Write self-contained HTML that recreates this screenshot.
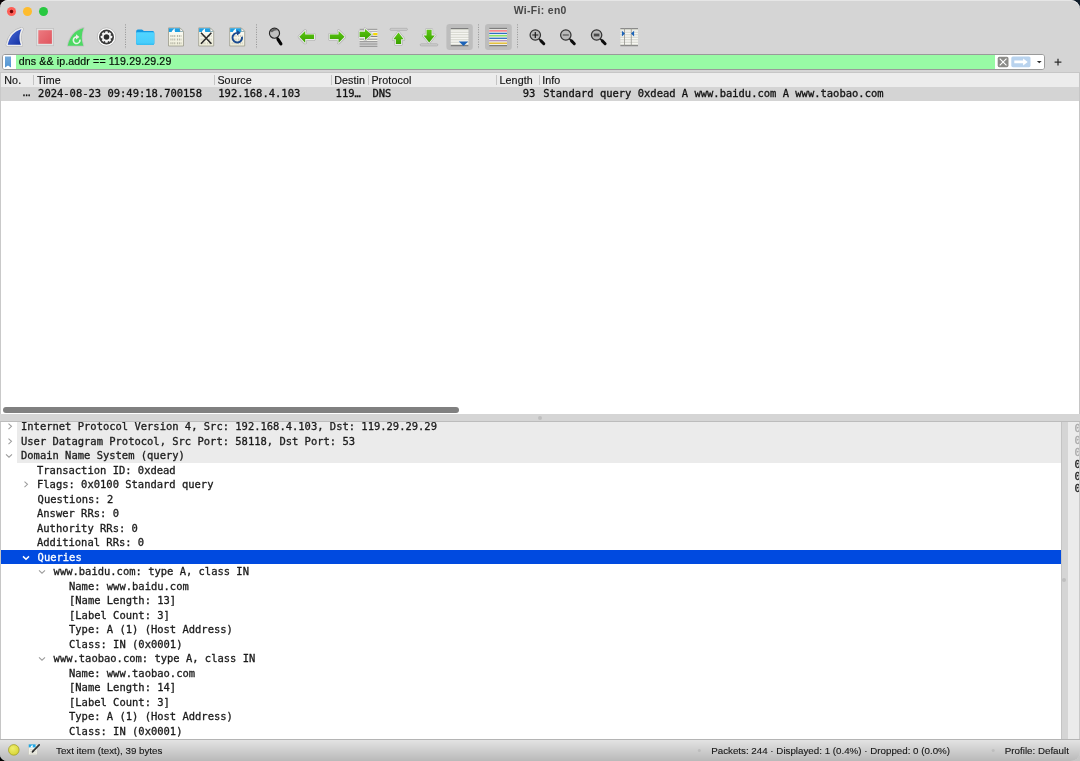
<!DOCTYPE html>
<html><head><meta charset="utf-8">
<style>
*{box-sizing:border-box;margin:0;padding:0}
html,body{width:1080px;height:761px;overflow:hidden;background:#c6c6c6}
body{position:relative;font-family:"Liberation Sans",sans-serif;font-size:10.5px;color:#1e1e1e}
.win{position:absolute;left:0;top:0;width:1080px;height:761px;background:#d5d5d5;border-radius:8px 9px 9px 7px;overflow:hidden;will-change:transform;box-shadow:inset 0 1px 0 #e6e6e6}
.cnr{position:absolute;width:12px;height:12px}
.abs{position:absolute}
.title{position:absolute;left:0;top:0;width:1080px;height:21px;text-align:center;font-weight:bold;font-size:10.4px;line-height:22px;letter-spacing:0.35px;padding-left:0.4px;color:#474747}
.tl{position:absolute;top:6.7px;width:9.4px;height:9.4px;border-radius:50%}
.mono{font-family:"DejaVu Sans Mono","Liberation Mono",monospace;font-size:10.47px;white-space:pre;-webkit-text-stroke:0.3px}
/* filter */
.filter{position:absolute;left:1.5px;top:54.2px;width:1043.8px;height:15.4px;background:#fff;border:1px solid #9a9a9a;border-radius:3px;overflow:hidden}
.filter .bm{position:absolute;left:0;top:0;width:13.2px;height:14px;background:#fff}
.filter .gr{position:absolute;left:13.2px;top:0;right:49.6px;height:14px;background:#98fba5}
.filter .txt{position:absolute;left:16.2px;top:0;line-height:13.6px;font-size:10.6px;letter-spacing:0.13px;color:#061006;-webkit-text-stroke:0.2px}
.filter .rt{position:absolute;right:-0.2px;top:0;width:49.8px;height:14px;background:#fff}
/* packet list */
.plist{position:absolute;left:0;top:72px;width:1080px;height:342.2px;background:#fff;border-top:1px solid #c6c6c6}
.plist::after{content:"";position:absolute;left:0;top:0;width:1px;height:100%;background:#c9c9c9}
.plist::before{content:"";position:absolute;right:0;top:0;width:1px;height:100%;background:#c6c6c6;z-index:2}
.phead{position:absolute;left:0;top:0;width:1080px;height:13.8px;background:#ececec}
.phead span{position:absolute;top:0;line-height:14.4px;font-size:10.7px;letter-spacing:0.1px;color:#141414;-webkit-text-stroke:0.15px}
.phead i{position:absolute;top:1.6px;width:1px;height:10.6px;background:#c4c4c4}
.prow{position:absolute;left:0;top:13.8px;width:1080px;height:13.9px;background:#d4d4d4}
.prow span{position:absolute;top:0;line-height:13.6px;color:#111}
.hscroll{position:absolute;left:2.6px;top:334.4px;width:456px;height:5.4px;border-radius:3px;background:#808080}
/* details */
.det{position:absolute;left:0;top:421.5px;width:1061.7px;height:317.3px;background:#fff;overflow:hidden;border-left:1.2px solid #c6c6c6;border-right:0.7px solid #c4c4c4}
.r{position:absolute;left:0;width:1061px;height:14.5px;line-height:14.5px;color:#1a1a1a}
.r.g::before{content:"";position:absolute;left:16px;top:0;right:0;height:14.5px;background:#ebebeb}
.r.sel{background:#004ae0;color:#fff;height:14.9px}
.r span{position:absolute;top:0}
.ch{position:absolute;top:0}
.bytes{position:absolute;left:1067.9px;top:421.5px;width:12.1px;height:317.3px;background:#ebebeb;overflow:hidden;border-right:1px solid #c9c9c9;font-size:10.5px}
.bytes span{position:absolute;left:6.7px;line-height:12px;height:12px}
.status{position:absolute;left:0;top:738.8px;width:1080px;height:22.2px;border-top:1.2px solid #b4b4b4;background:linear-gradient(#e3e3e3,#b9b9b9);font-size:9.78px;color:#161616;-webkit-text-stroke:0.12px}
.status span{position:absolute;top:0;line-height:21px}
</style></head><body>
<div class="cnr" style="left:0;top:0;background:#0a0206"></div><div class="cnr" style="right:0;top:0;background:#0e1b28"></div><div class="cnr" style="left:0;bottom:0;background:#000"></div>
<div class="win">
 <div class="title">Wi-Fi: en0</div>
 <div class="tl" style="left:6.7px;background:radial-gradient(circle,#6e0000 0,#7a0505 1.3px,#fe5f57 2.2px)"></div>
 <div class="tl" style="left:22.8px;background:#febc2e"></div>
 <div class="tl" style="left:38.9px;background:#28c840"></div>

<!--TB-->
 <svg class="abs" style="left:0;top:22px" width="1080" height="30" viewBox="0 22 1080 30">
  <defs>
   <linearGradient id="gB" x1="0" y1="0" x2="1" y2="1"><stop offset="0" stop-color="#4a6ad8"/><stop offset="1" stop-color="#1230a2"/></linearGradient>
   <linearGradient id="gR" x1="0" y1="0" x2="1" y2="1"><stop offset="0" stop-color="#ec7a80"/><stop offset="1" stop-color="#e0555e"/></linearGradient>
   <linearGradient id="gG" x1="0" y1="0" x2="0" y2="1"><stop offset="0" stop-color="#5cc812"/><stop offset="1" stop-color="#3aa000"/></linearGradient>
   <linearGradient id="gDoc" x1="0" y1="0" x2="0" y2="1"><stop offset="0" stop-color="#fdfdf8"/><stop offset="1" stop-color="#efeeda"/></linearGradient>
   <filter id="sh" x="-20%" y="-20%" width="140%" height="140%"><feDropShadow dx="0" dy="0.3" stdDeviation="0.45" flood-color="#000" flood-opacity="0.35"/></filter>
   <linearGradient id="gF" x1="0" y1="0" x2="0" y2="1"><stop offset="0" stop-color="#52d5ff"/><stop offset="0.8" stop-color="#48cefc"/><stop offset="1" stop-color="#34bcf0"/></linearGradient>
   <path id="fin" d="M21.5 29.2 C13.5 31.3 9.3 37.5 7.8 44.7 L20.9 44.7 C18.9 40 18.9 34 21.5 29.2 Z"/>
   <path id="fin2" d="M83.6 27.9 C74 30.5 69.5 37.5 67.8 45.7 L83.3 45.7 C81.2 40 81.2 34 83.6 27.9 Z"/>
   <g id="doc">
    <path d="M0.5 0.5 H12 L15.5 4 V18.6 H0.5 Z" fill="url(#gDoc)" stroke="#9a9a8c" stroke-width="0.8"/>
    <path d="M0.9 0.9 H11.9 L15 4 V4.7 H0.9 Z" fill="#1e9fe2"/>
    <path d="M3.6 4.7 C4.4 3 5.4 1.9 7 1.2 C6.5 2.4 6.6 3.6 7.2 4.7 Z" fill="#fff"/>
    <path d="M12 0.5 V4 H15.5 Z" fill="#fff" stroke="#9a9a8c" stroke-width="0.6"/>
   </g>
   <g id="doclines" stroke="#8f8f80" stroke-width="2" stroke-dasharray="1.1 0.8 1.1 0.8 1.1 1.6" opacity="0.62">
    <path d="M2.4 8.6 H13.4"/><path d="M2.4 12.2 H13.4"/><path d="M2.4 15.8 H13.4"/>
   </g>
   <g id="mag">
    <circle cx="0" cy="0" r="5.2" fill="#b9b9b9" stroke="#333" stroke-width="1.25"/>
    <path d="M3.7 3.9 L5.6 5.8" stroke="#1a1a1a" stroke-width="1.6"/>
    <path d="M5.7 5.9 L8.5 8.7" stroke="#0c0c0c" stroke-width="3" stroke-linecap="round"/>
   </g>
  </defs>

  <!-- start capture (blue fin) -->
  <use href="#fin" fill="none" stroke="#b8b8b8" stroke-width="4.4" stroke-linejoin="round"/>
  <use href="#fin" fill="none" stroke="#ececec" stroke-width="3.2" stroke-linejoin="round"/>
  <use href="#fin" fill="url(#gB)"/>
  <!-- stop (red square) -->
  <rect x="36.4" y="28.5" width="17.2" height="17.2" fill="#e2e2e2" stroke="#c2c2c2" stroke-width="0.8"/>
  <rect x="38.3" y="30.2" width="13.6" height="13.6" fill="url(#gR)"/>
  <!-- restart (green fin) -->
  <use href="#fin2" fill="none" stroke="#c4c4c4" stroke-width="1.8" stroke-linejoin="round"/>
  <use href="#fin2" fill="#4dd964"/>
  <path d="M79.9 39.6 A3.3 3.3 0 1 1 76.4 36.9" fill="none" stroke="#eaf6ea" stroke-width="1.6"/>
  <path d="M76 34.3 L79.4 36.9 L76 39.4 Z" fill="#f3e9ee"/>
  <!-- options (gear) -->
  <circle cx="106.5" cy="37" r="9.2" fill="#fff" stroke="#b0b0b0" stroke-width="0.7"/>
  <circle cx="106.5" cy="37" r="7.5" fill="#3b3b3b"/>
  <g transform="translate(106.5 37)" fill="#f4f4f4">
   <circle r="4.5"/>
   <g id="teeth"><rect x="-1.3" y="-5.7" width="2.6" height="11.4" rx="0.6"/><rect x="-5.7" y="-1.3" width="11.4" height="2.6" rx="0.6"/></g>
   <use href="#teeth" transform="rotate(45)"/>
   <circle r="2.8" fill="#2e2e2e"/>
  </g>

  <!-- separators -->
  <g stroke="#8c8c8c" stroke-width="1" stroke-dasharray="1 1.45" opacity="0.9">
   <path d="M125.5 24.4 V49"/><path d="M256.5 24.4 V49"/><path d="M478.5 24.4 V49"/><path d="M517.5 24.4 V49"/>
  </g>

  <!-- open (folder) -->
  <path d="M136.2 31.2 Q136.2 29.5 137.9 29.5 H141.6 Q142.3 29.5 142.8 30 L143.8 31 H152.6 Q154.3 31 154.3 32.7 V43.3 Q154.3 45 152.6 45 H137.9 Q136.2 45 136.2 43.3 Z" fill="#1398e2"/>
  <path d="M136.2 33.4 Q136.2 32.2 137.4 32.2 H153.1 Q154.3 32.2 154.3 33.4 V43.3 Q154.3 45 152.6 45 H137.9 Q136.2 45 136.2 43.3 Z" fill="url(#gF)"/>
  <!-- save -->
  <g transform="translate(168 27.4)"><use href="#doc"/><use href="#doclines"/></g>
  <!-- close -->
  <g transform="translate(198.2 27.4)"><use href="#doc"/><use href="#doclines" opacity="0.6"/>
   <path d="M2.8 5.4 L13.2 16.4 M13.2 5.4 L2.8 16.4" stroke="#2a2a2a" stroke-width="1.55" fill="none"/></g>
  <!-- reload -->
  <g transform="translate(229.2 27.4)"><use href="#doc"/><use href="#doclines" opacity="0.6"/>
   <path d="M12.8 9.4 A4.8 4.8 0 1 1 8.4 5.5" fill="none" stroke="#194a90" stroke-width="1.9"/>
   <path d="M7.6 2.7 L11.6 5.4 L7.8 8.2 Z" fill="#194a90"/></g>

  <!-- find -->
  <g transform="translate(274.5 33.2)"><circle r="5.05" fill="#c0c0c0" stroke="#262626" stroke-width="1.15"/><path d="M-4.3 -1.2 A4.5 4.5 0 0 1 3.7 -2.6 Q0.6 -3.6 -2.4 -1 Q-3.2 -1.5 -4.3 -1.2 Z" fill="#585858" opacity="0.9"/><path d="M2.6 4.4 L3.6 6" stroke="#111" stroke-width="1.8"/><path d="M3.5 6.1 L6.4 10.7" stroke="#050505" stroke-width="3.1" stroke-linecap="round"/></g>
  <!-- back -->
  <path d="M299.3 36.8 L305.2 30.9 V34.5 H314 V39.1 H305.2 V42.8 Z" fill="none" stroke="#a8a8a8" stroke-width="3.1" stroke-linejoin="round"/><path d="M299.3 36.8 L305.2 30.9 V34.5 H314 V39.1 H305.2 V42.8 Z" fill="none" stroke="#e9e9e9" stroke-width="2.1" stroke-linejoin="round"/><path d="M299.3 36.8 L305.2 30.9 V34.5 H314 V39.1 H305.2 V42.8 Z" fill="url(#gG)"/>
  <!-- forward -->
  <path d="M344.5 36.8 L338.6 30.9 V34.5 H329.8 V39.1 H338.6 V42.8 Z" fill="none" stroke="#a8a8a8" stroke-width="3.1" stroke-linejoin="round"/><path d="M344.5 36.8 L338.6 30.9 V34.5 H329.8 V39.1 H338.6 V42.8 Z" fill="none" stroke="#e9e9e9" stroke-width="2.1" stroke-linejoin="round"/><path d="M344.5 36.8 L338.6 30.9 V34.5 H329.8 V39.1 H338.6 V42.8 Z" fill="url(#gG)"/>
  <!-- goto -->
  <g>
   <rect x="359.6" y="28.8" width="17.8" height="12.6" fill="#f1f1ea"/>
   <g stroke="#8e8e8e" stroke-width="1"><path d="M359.6 29.3 H377.4"/><path d="M359.6 31.4 H377.4" stroke="#b0b0b0"/><path d="M368 36.4 H377.4" stroke="#777"/><path d="M359.6 39.2 H377.4"/><path d="M359.6 41.7 H377.4"/><path d="M359.6 44 H377.4"/><path d="M359.6 46.3 H377.4"/></g>
   <rect x="373.2" y="33" width="4.2" height="2.2" fill="#f7d800"/>
   <path d="M359.6 31.7 H365 V28.9 L371.5 34.4 L365 39.9 V37 H359.6 Z" fill="none" stroke="#a8a8a8" stroke-width="2.6" stroke-linejoin="round"/>
   <path d="M359.6 31.7 H365 V28.9 L371.5 34.4 L365 39.9 V37 H359.6 Z" fill="none" stroke="#ececec" stroke-width="1.8" stroke-linejoin="round"/>
   <path d="M359.6 31.7 H365 V28.9 L371.5 34.4 L365 39.9 V37 H359.6 Z" fill="url(#gG)"/>
  </g>
  <!-- first -->
  <rect x="390" y="28.3" width="17.4" height="2.1" rx="1" fill="#cecece" stroke="#a4a4a4" stroke-width="0.6"/>
  <path d="M398.5 32.6 L403.6 39.2 H401.1 V44.1 H395.9 V39.2 H393.4 Z" fill="none" stroke="#a8a8a8" stroke-width="3.1" stroke-linejoin="round"/><path d="M398.5 32.6 L403.6 39.2 H401.1 V44.1 H395.9 V39.2 H393.4 Z" fill="none" stroke="#e9e9e9" stroke-width="2.1" stroke-linejoin="round"/><path d="M398.5 32.6 L403.6 39.2 H401.1 V44.1 H395.9 V39.2 H393.4 Z" fill="url(#gG)"/>
  <!-- last -->
  <rect x="420.2" y="43.8" width="17.6" height="2.1" rx="1" fill="#cecece" stroke="#a4a4a4" stroke-width="0.6"/>
  <path d="M429.2 42.4 L434.8 35.4 H431.6 V29.7 H426.6 V35.4 H423.6 Z" fill="none" stroke="#a8a8a8" stroke-width="3.1" stroke-linejoin="round"/><path d="M429.2 42.4 L434.8 35.4 H431.6 V29.7 H426.6 V35.4 H423.6 Z" fill="none" stroke="#e9e9e9" stroke-width="2.1" stroke-linejoin="round"/><path d="M429.2 42.4 L434.8 35.4 H431.6 V29.7 H426.6 V35.4 H423.6 Z" fill="url(#gG)"/>
  <!-- autoscroll (pressed) -->
  <rect x="446.4" y="24" width="26.4" height="26" rx="3.2" fill="#bdbdbd"/>
  <rect x="450.8" y="28" width="17.6" height="18" fill="#d2d4ca"/>
  <g stroke="#f6f6f2" stroke-width="1.5"><path d="M450.8 31 H468.4"/><path d="M450.8 33.5 H468.4"/><path d="M450.8 36 H468.4"/><path d="M450.8 38.5 H468.4"/><path d="M450.8 41 H468.4"/><path d="M450.8 43.5 H468.4"/></g>
  <path d="M450.8 28.5 H468.4 M450.8 45.6 H468.4" stroke="#7d7d7d" stroke-width="1.1"/>
  <path d="M458.8 41.4 H468.2 L463.5 46 Z" fill="#1c63b8"/>
  <!-- colorize (pressed) -->
  <rect x="485" y="24" width="26.8" height="26" rx="3.2" fill="#bdbdbd"/>
  <rect x="489.2" y="28" width="17.8" height="18" fill="#f3f3ee"/>
  <g stroke-width="1.3">
   <path d="M489.2 28.5 H507" stroke="#7d7d7d"/><path d="M489.2 30.9 H507" stroke="#f8626c"/><path d="M489.2 33.4 H507" stroke="#2e6fc4"/>
   <path d="M489.2 35.8 H507" stroke="#7ade50"/><path d="M489.2 38.3 H507" stroke="#2e6fc4"/><path d="M489.2 40.7 H507" stroke="#b08fc0"/>
   <path d="M489.2 43.2 H507" stroke="#e2b81e"/><path d="M489.2 45.6 H507" stroke="#7d7d7d"/>
  </g>
  <!-- zoom in/out/reset -->
  <g transform="translate(535.3 35)"><use href="#mag"/><path d="M-3 0 H3 M0 -3 V3" stroke="#1c1c1c" stroke-width="1.2"/></g>
  <g transform="translate(565.8 35)"><use href="#mag"/><path d="M-3 0 H3" stroke="#5a5a5a" stroke-width="1.3"/></g>
  <g transform="translate(596.6 35)"><use href="#mag"/><rect x="-2.8" y="-1.4" width="5.6" height="2.8" fill="#4a4a4a"/></g>
  <!-- resize columns -->
  <g>
   <rect x="620.4" y="28" width="17.6" height="18" fill="#d2d4ca"/>
   <g stroke="#f6f6f2" stroke-width="1.5"><path d="M620.4 31 H638"/><path d="M620.4 33.5 H638"/><path d="M620.4 36 H638"/><path d="M620.4 38.5 H638"/><path d="M620.4 41 H638"/><path d="M620.4 43.5 H638"/></g>
   <path d="M620.4 28.5 H638 M620.4 45.6 H638" stroke="#8a8a8a" stroke-width="1.1"/>
   <path d="M624.5 28 V46 M631.3 28 V46" stroke="#96968f" stroke-width="0.8"/>
   <path d="M621.9 30.7 L625 33.6 L621.9 36.5 Z M634.1 30.7 L631 33.6 L634.1 36.5 Z" fill="#1c63b8"/>
  </g>
 </svg>
<!--/TB-->
 <div class="filter"><div class="bm"><svg class="abs" style="left:0;top:0" width="13" height="14" viewBox="0 0 13 14"><defs><linearGradient id="gBm" x1="0" y1="0" x2="0" y2="1"><stop offset="0" stop-color="#74aadc"/><stop offset="1" stop-color="#4f93d2"/></linearGradient></defs><path d="M2 1.4 H8 V12.6 L5 10.6 L2 12.6 Z" fill="url(#gBm)"/></svg></div><div class="gr"></div><div class="txt">dns &amp;&amp; ip.addr == 119.29.29.29</div><div class="rt"><svg class="abs" style="left:0;top:0" width="50" height="14" viewBox="994.5 55.2 50 14"><rect x="997.2" y="57" width="10.8" height="10.4" rx="1.6" fill="#8b8b88"/><path d="M999.2 58.8 L1006 65.6 M1006 58.8 L999.2 65.6" stroke="#fff" stroke-width="1.1"/><rect x="1010.8" y="56.6" width="19.2" height="10.8" rx="1.6" fill="#b9d3ee"/><path d="M1013.8 60.8 H1022.6 V58.6 L1027.2 62.1 L1022.6 65.6 V63.4 H1013.8 Z" fill="#fff"/><path d="M1036.4 61.1 H1041.2 L1038.8 63.5 Z" fill="#2e2e2e"/></svg></div></div>
 <svg class="abs" style="left:1054px;top:58px" width="8" height="8" viewBox="0 0 8 8"><path d="M0.6 4.2 H7.4 M4 0.8 V7.6" stroke="#2e2e2e" stroke-width="1.25"/></svg>

 <div class="plist">
  <div class="phead">
   <span style="left:4.3px">No.</span><i style="left:32.9px"></i>
   <span style="left:37px">Time</span><i style="left:213.5px"></i>
   <span style="left:217.4px">Source</span><i style="left:330.9px"></i>
   <span style="left:334.2px">Destin</span><i style="left:367.9px"></i>
   <span style="left:371.4px">Protocol</span><i style="left:496px"></i>
   <span style="left:499.5px">Length</span><i style="left:538.7px"></i>
   <span style="left:542.2px">Info</span>
  </div>
  <div class="prow mono">
   <span style="left:22.4px;top:0.7px;font-family:'Liberation Sans',sans-serif;font-size:8.2px;font-weight:bold">…</span>
   <span style="left:38.1px">2024-08-23 09:49:18.700158</span>
   <span style="left:218.3px">192.168.4.103</span>
   <span style="left:335.6px">119…</span>
   <span style="left:372.4px">DNS</span>
   <span style="left:522.8px">93</span>
   <span style="left:543.2px">Standard query 0xdead A www.baidu.com A www.taobao.com</span>
  </div>
  <div class="hscroll"></div>
 </div>

 <div class="det mono">
  <div class="r g" style="top:-2.4px"><svg class="ch" style="left:5.0px" width="8" height="14.5" viewBox="-4 -7.25 8 14.5"><path d="M-1.5 -2.7 L1.5 0.1 L-1.5 2.9" fill="none" stroke="#9c9c9c" stroke-width="1.05"/></svg><span style="left:20.0px">Internet Protocol Version 4, Src: 192.168.4.103, Dst: 119.29.29.29</span></div>
  <div class="r g" style="top:12.1px"><svg class="ch" style="left:5.0px" width="8" height="14.5" viewBox="-4 -7.25 8 14.5"><path d="M-1.5 -2.7 L1.5 0.1 L-1.5 2.9" fill="none" stroke="#9c9c9c" stroke-width="1.05"/></svg><span style="left:20.0px">User Datagram Protocol, Src Port: 58118, Dst Port: 53</span></div>
  <div class="r g" style="top:26.6px"><svg class="ch" style="left:4.4px" width="8" height="14.5" viewBox="-4 -7.25 8 14.5"><path d="M-3 -0.9 L0 2 L3 -0.9" fill="none" stroke="#9c9c9c" stroke-width="1.05"/></svg><span style="left:20.0px">Domain Name System (query)</span></div>
  <div class="r" style="top:41.1px"><span style="left:36.0px">Transaction ID: 0xdead</span></div>
  <div class="r" style="top:55.6px"><svg class="ch" style="left:21.0px" width="8" height="14.5" viewBox="-4 -7.25 8 14.5"><path d="M-1.5 -2.7 L1.5 0.1 L-1.5 2.9" fill="none" stroke="#9c9c9c" stroke-width="1.05"/></svg><span style="left:36.0px">Flags: 0x0100 Standard query</span></div>
  <div class="r" style="top:70.1px"><span style="left:36.6px">Questions: 2</span></div>
  <div class="r" style="top:84.6px"><span style="left:36.0px">Answer RRs: 0</span></div>
  <div class="r" style="top:99.1px"><span style="left:36.0px">Authority RRs: 0</span></div>
  <div class="r" style="top:113.6px"><span style="left:36.0px">Additional RRs: 0</span></div>
  <div class="r sel" style="top:128.1px"><svg class="ch" style="left:20.9px" width="8" height="14.5" viewBox="-4 -7.25 8 14.5"><path d="M-3 -0.9 L0 2 L3 -0.9" fill="none" stroke="#fff" stroke-width="1.5"/></svg><span style="left:36.6px">Queries</span></div>
  <div class="r" style="top:142.6px"><svg class="ch" style="left:36.9px" width="8" height="14.5" viewBox="-4 -7.25 8 14.5"><path d="M-3 -0.9 L0 2 L3 -0.9" fill="none" stroke="#9c9c9c" stroke-width="1.05"/></svg><span style="left:52.6px">www.baidu.com: type A, class IN</span></div>
  <div class="r" style="top:157.1px"><span style="left:68.0px">Name: www.baidu.com</span></div>
  <div class="r" style="top:171.6px"><span style="left:68.0px">[Name Length: 13]</span></div>
  <div class="r" style="top:186.1px"><span style="left:68.0px">[Label Count: 3]</span></div>
  <div class="r" style="top:200.6px"><span style="left:68.0px">Type: A (1) (Host Address)</span></div>
  <div class="r" style="top:215.1px"><span style="left:68.0px">Class: IN (0x0001)</span></div>
  <div class="r" style="top:229.6px"><svg class="ch" style="left:36.9px" width="8" height="14.5" viewBox="-4 -7.25 8 14.5"><path d="M-3 -0.9 L0 2 L3 -0.9" fill="none" stroke="#9c9c9c" stroke-width="1.05"/></svg><span style="left:52.6px">www.taobao.com: type A, class IN</span></div>
  <div class="r" style="top:244.1px"><span style="left:68.0px">Name: www.taobao.com</span></div>
  <div class="r" style="top:258.6px"><span style="left:68.0px">[Name Length: 14]</span></div>
  <div class="r" style="top:273.1px"><span style="left:68.0px">[Label Count: 3]</span></div>
  <div class="r" style="top:287.6px"><span style="left:68.0px">Type: A (1) (Host Address)</span></div>
  <div class="r" style="top:302.1px"><span style="left:68.0px">Class: IN (0x0001)</span></div>
 </div>
 <div class="bytes mono"><span style="top:0.4px;color:#a9a9a9">0</span><span style="top:12.4px;color:#a9a9a9">0</span><span style="top:24.4px;color:#a9a9a9">0</span><span style="top:36.4px;color:#1c1c1c">0</span><span style="top:48.4px;color:#1c1c1c">0</span><span style="top:60.4px;color:#1c1c1c">0</span></div>
 <div class="abs" style="left:0;top:420.7px;width:1080px;height:0.9px;background:#bcbcbc"></div>
 <div class="abs" style="left:537.8px;top:415.7px;width:4.4px;height:4.4px;border-radius:50%;background:#bebebe"></div>
 <div class="abs" style="left:1062px;top:578.1px;width:4.4px;height:4.4px;border-radius:50%;background:#bebebe"></div>

 <div class="status">
  <svg class="abs" style="left:0;top:0.5px" width="1080" height="21" viewBox="0 740 1080 21">
   <defs><radialGradient id="gY" cx="0.4" cy="0.35" r="0.7"><stop offset="0" stop-color="#efee6e"/><stop offset="1" stop-color="#d6d432"/></radialGradient></defs>
   <circle cx="13.8" cy="749.9" r="5.3" fill="url(#gY)" stroke="#a19f2c" stroke-width="0.8"/>
   <rect x="28.8" y="744.4" width="8.2" height="10.4" fill="#f3f3ea" stroke="#c8c8bc" stroke-width="0.5"/>
   <rect x="28.8" y="744.4" width="6.8" height="3" fill="#1ea6e6"/>
   <path d="M30.4 747.4 C30.9 746.2 31.6 745.4 32.8 744.8 C32.4 745.7 32.5 746.6 33 747.4 Z" fill="#fff"/>
   <path d="M30 749.6 H36 M30 751.4 H36 M30 753.2 H36" stroke="#cfcfc4" stroke-width="0.7"/>
   <path d="M39.2 744.8 L32.6 751.6" stroke="#333" stroke-width="1.7" stroke-linecap="round"/>
   <path d="M32.9 750.6 L31.5 752.9 L33.9 751.7 Z" fill="#222"/>
   <circle cx="699.3" cy="750.6" r="1.5" fill="#bdbdbd"/><circle cx="993.2" cy="750.6" r="1.5" fill="#bdbdbd"/>
  </svg>
  <span style="left:56px">Text item (text), 39 bytes</span>
  <span style="left:711.2px">Packets: 244 · Displayed: 1 (0.4%) · Dropped: 0 (0.0%)</span>
  <span style="left:1004.8px">Profile: Default</span>
 </div>
</div>
</body></html>
